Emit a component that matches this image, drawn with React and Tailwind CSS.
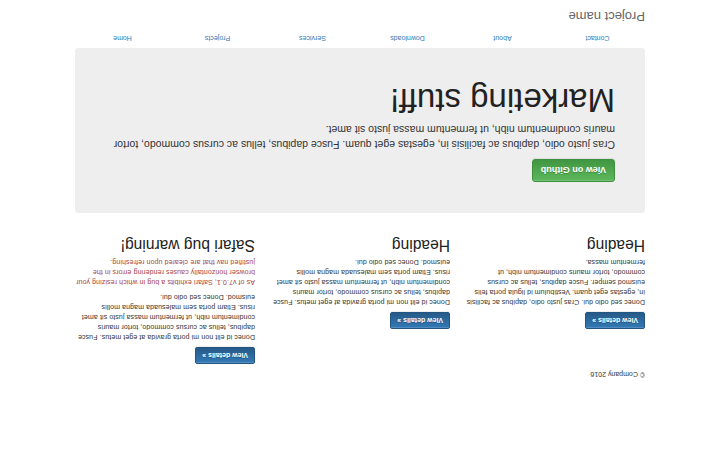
import React from "react";

const navItems = ["Home", "Projects", "Services", "Downloads", "About", "Contact"];

function Btn({ children }) {
  return (
    <p className="mb-[5px] rotate-180 text-[7px] leading-[10px]">
      <a
        href="#"
        className="inline-block rounded-[2px] border border-[#245580] bg-gradient-to-b from-[#337ab7] to-[#265a88] px-[6px] py-[2.5px] align-middle text-[7px] font-bold leading-[10px] text-white shadow-[inset_0_1px_0_rgba(255,255,255,0.15),0_1px_1px_rgba(0,0,0,0.075)] [text-shadow:0_-1px_0_rgba(0,0,0,0.2)]"
      >
        {children}
      </a>
    </p>
  );
}

function Lines({ lines, className = "" }) {
  return (
    <p
      className={`mb-[5px] rotate-180 whitespace-nowrap text-[7px] leading-[10px] tracking-[0.1px] ${className}`}
    >
      {lines.map((l, i) => (
        <React.Fragment key={i}>
          {l}
          {i < lines.length - 1 && <br />}
        </React.Fragment>
      ))}
    </p>
  );
}

const donecId = [
  "Donec id elit non mi porta gravida at eget metus. Fusce",
  "dapibus, tellus ac cursus commodo, tortor mauris",
  "condimentum nibh, ut fermentum massa justo sit amet",
  "risus. Etiam porta sem malesuada magna mollis",
  "euismod. Donec sed odio dui.",
];

const h2 = "mb-[5px] mt-[8px] rotate-180 text-[15.6px] leading-[16.5px] text-[#222]";

export default function App() {
  return (
    <div className="min-h-[450px] bg-white font-['Liberation_Sans',Arial,sans-serif] text-[#333]">
      <div className="mx-auto w-[585px] px-[7.5px]">
        <h3 className="mb-[5px] mt-[10px] rotate-180 text-[13px] leading-[13.2px] text-[#666]">
          Project name
        </h3>
        <ul className="flex">
          {navItems.map((n) => (
            <li key={n} className="flex-1">
              <a
                href="#"
                className="block rotate-180 px-[7.5px] py-[5px] text-center text-[7px] leading-[10px] text-[#337ab7]"
              >
                {n}
              </a>
            </li>
          ))}
        </ul>
        <div className="mb-[15px] rounded-[3px] bg-[#eee] px-[30px] py-[24px]">
          <h1 className="mb-[5px] mt-[10px] rotate-180 text-[33px] leading-[34.65px] text-[#222]">
            Marketing stuff!
          </h1>
          <p className="mb-[7.5px] rotate-180 text-[10.5px] font-extralight leading-[15px]">
            Cras justo odio, dapibus ac facilisis in, egestas eget quam. Fusce dapibus, tellus ac
            cursus commodo, tortor mauris condimentum nibh, ut fermentum massa justo sit amet.
          </p>
          <p className="mb-[6.5px] rotate-180 text-[9px] leading-[12px]">
            <a
              href="#"
              className="inline-block rounded-[3px] border border-[#3e8f3e] bg-gradient-to-b from-[#5cb85c] to-[#419641] px-[8px] py-[4.5px] align-middle text-[9px] font-bold leading-[12px] text-white shadow-[inset_0_1px_0_rgba(255,255,255,0.15),0_1px_1px_rgba(0,0,0,0.075)] [text-shadow:0_-1px_0_rgba(0,0,0,0.2)]"
            >
              View on Github
            </a>
          </p>
        </div>
        <div className="-mx-[7.5px] grid grid-cols-3">
          <div className="px-[7.5px]">
            <h2 className={h2}>Safari bug warning!</h2>
            <Lines
              className="text-[#a94442]"
              lines={[
                "As of v7.0.1, Safari exhibits a bug in which resizing your",
                "browser horizontally causes rendering errors in the",
                "justified nav that are cleared upon refreshing.",
              ]}
            />
            <Lines lines={donecId} />
            <Btn>View details &raquo;</Btn>
          </div>
          <div className="px-[7.5px]">
            <h2 className={h2}>Heading</h2>
            <Lines lines={donecId} />
            <Btn>View details &raquo;</Btn>
          </div>
          <div className="px-[7.5px]">
            <h2 className={h2}>Heading</h2>
            <Lines
              lines={[
                "Donec sed odio dui. Cras justo odio, dapibus ac facilisis",
                "in, egestas eget quam. Vestibulum id ligula porta felis",
                "euismod semper. Fusce dapibus, tellus ac cursus",
                "commodo, tortor mauris condimentum nibh, ut",
                "fermentum massa.",
              ]}
            />
            <Btn>View details &raquo;</Btn>
          </div>
        </div>
        <footer>
          <p className="mb-[5px] rotate-180 text-[7px] leading-[10px]">&copy; Company 2016</p>
        </footer>
      </div>
    </div>
  );
}
